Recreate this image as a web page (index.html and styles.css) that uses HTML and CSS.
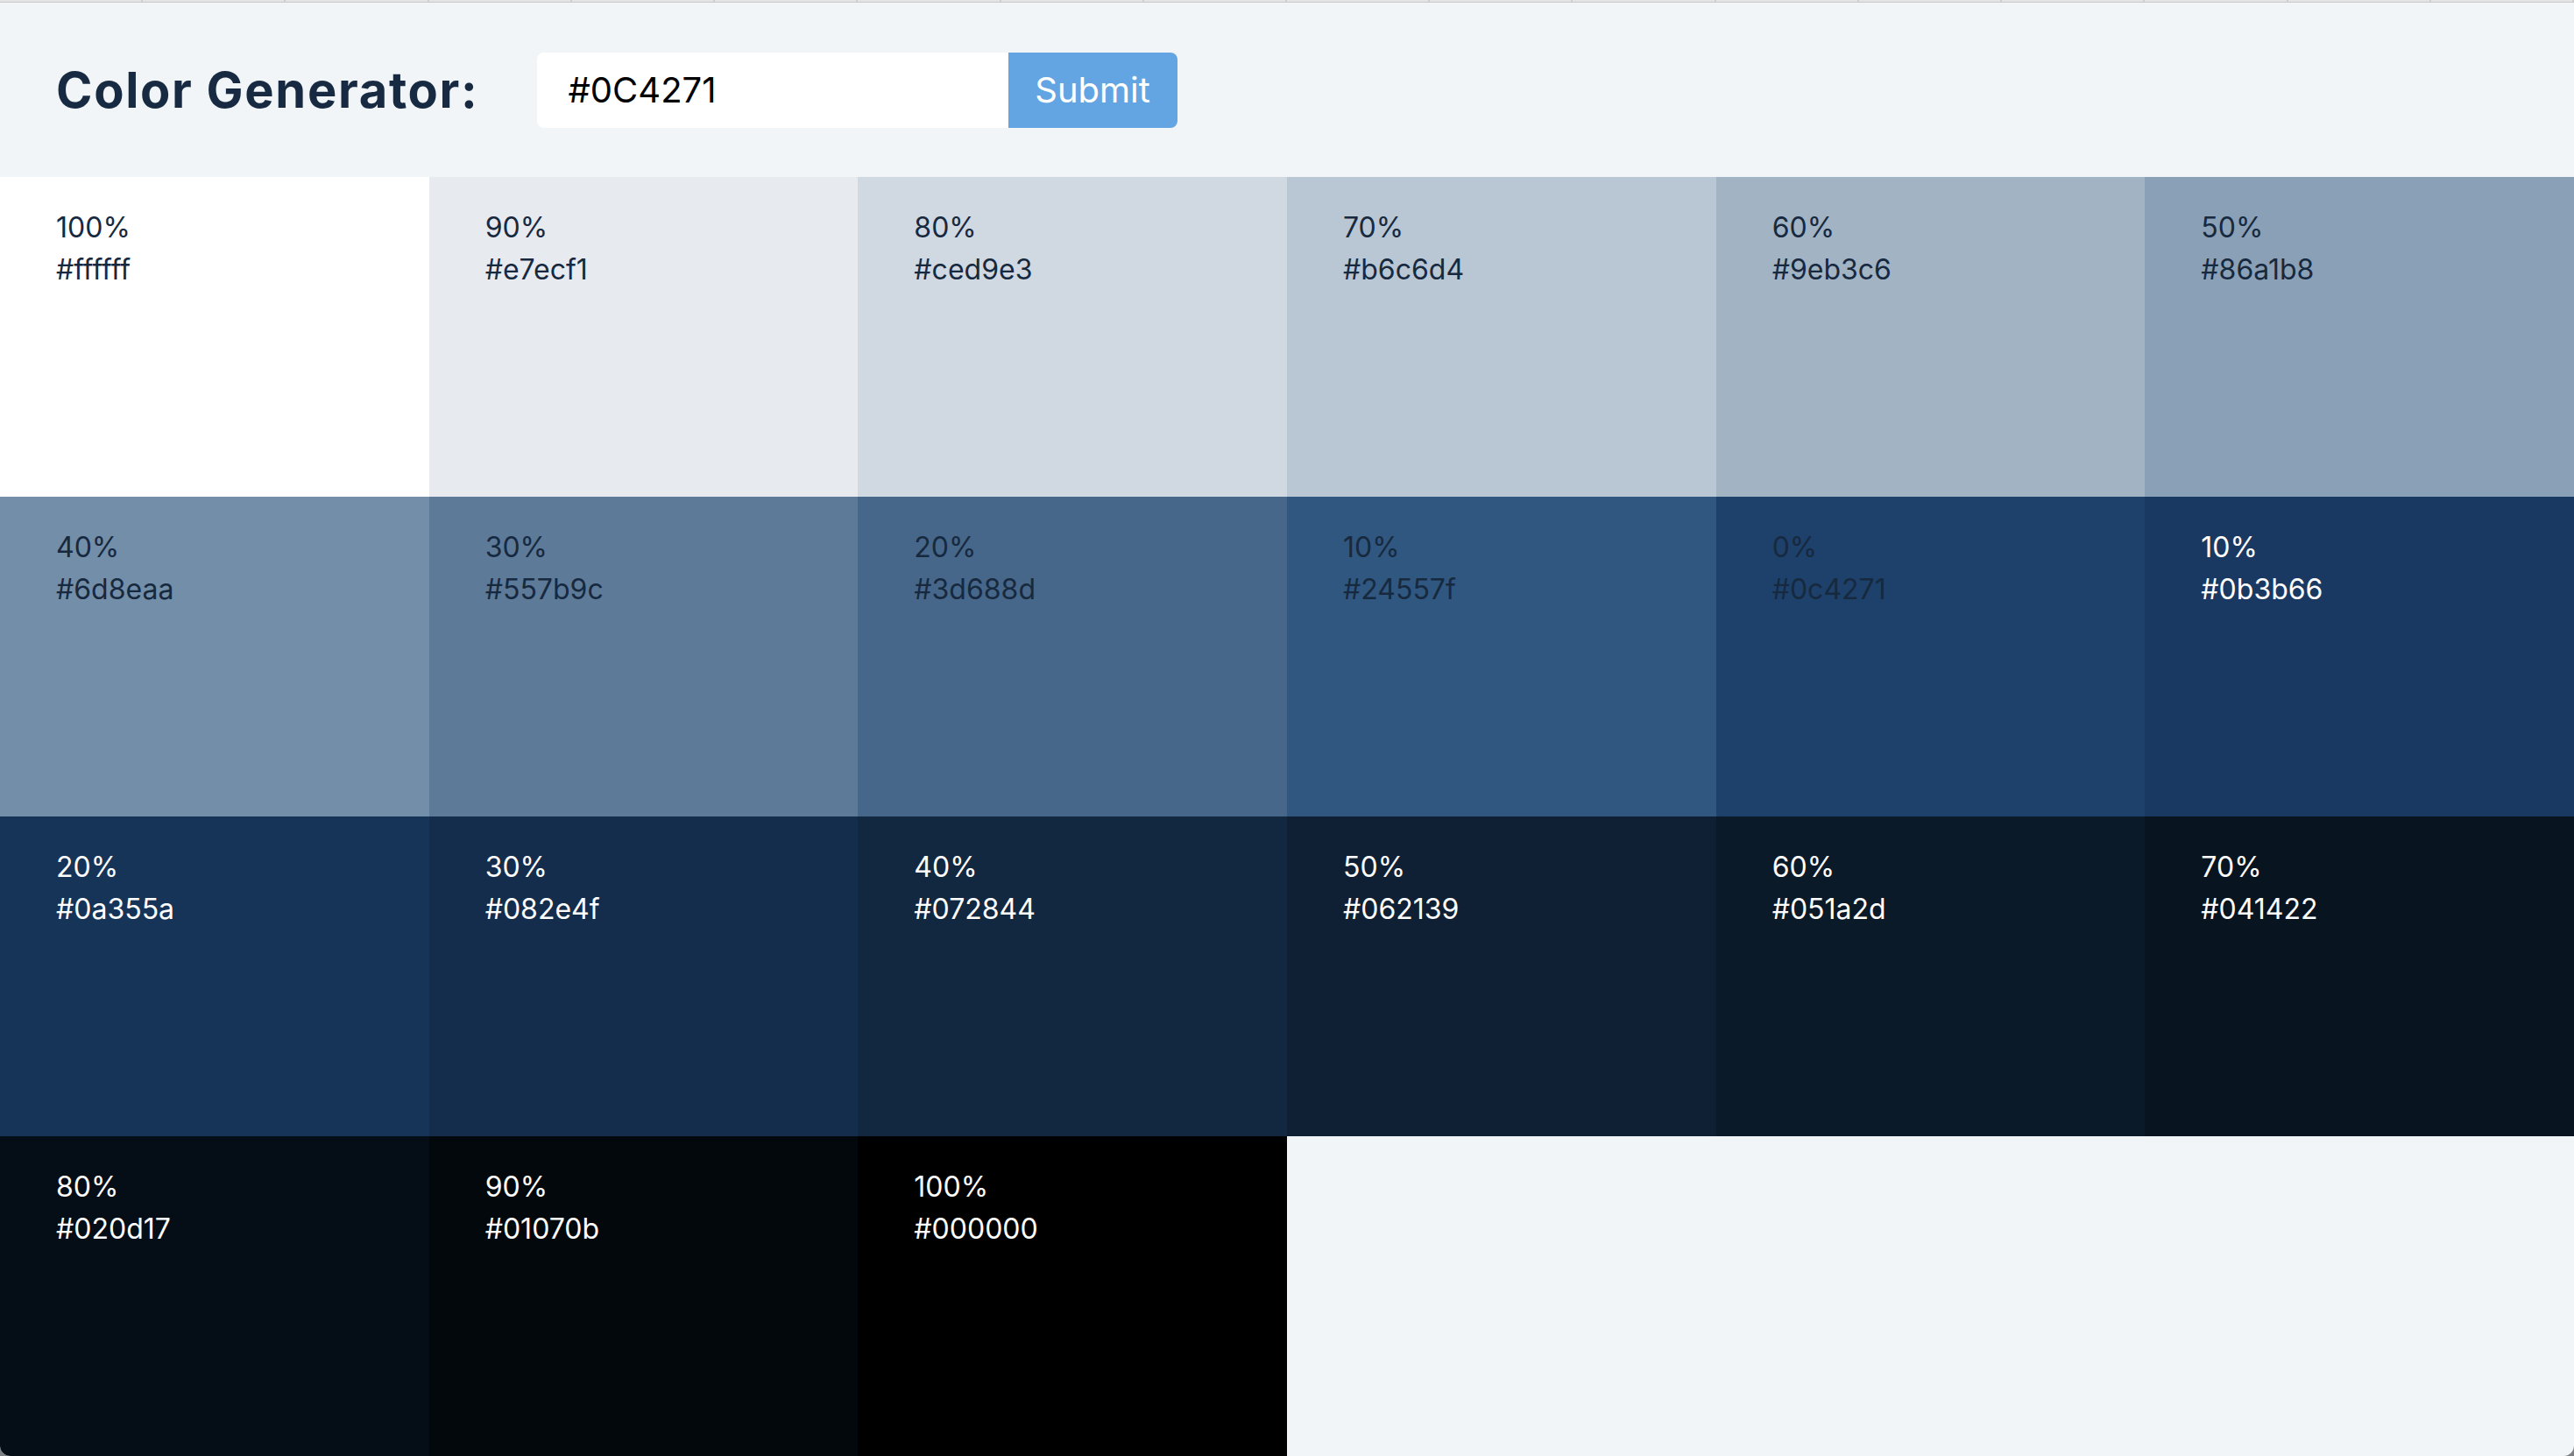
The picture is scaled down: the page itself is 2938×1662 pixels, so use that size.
FILE: index.html
```html
<!DOCTYPE html>
<html lang="en">
<head>
<meta charset="utf-8">
<title>Color Generator</title>
<link rel="stylesheet" href="styles.css">
</head>
<body>
<div class="window">
  <div class="tabstrip">
    <span class="tab"></span><span class="tab"></span><span class="tab"></span><span class="tab"></span>
    <span class="tab"></span><span class="tab"></span><span class="tab"></span><span class="tab"></span>
    <span class="tab"></span><span class="tab"></span><span class="tab"></span><span class="tab"></span>
    <span class="tab"></span><span class="tab"></span><span class="tab"></span><span class="tab"></span>
    <span class="tab"></span><span class="tab"></span>
  </div>
  <section class="container">
    <h3 class="title">Color Generator:</h3>
    <form class="form">
      <input class="input" type="text" value="#0C4271">
      <button class="btn" type="button">Submit</button>
    </form>
  </section>
  <section class="colors">
    <article class="color c1"><p class="percent">100%</p><p class="value">#ffffff</p></article>
    <article class="color c2"><p class="percent">90%</p><p class="value">#e7ecf1</p></article>
    <article class="color c3"><p class="percent">80%</p><p class="value">#ced9e3</p></article>
    <article class="color c4"><p class="percent">70%</p><p class="value">#b6c6d4</p></article>
    <article class="color c5"><p class="percent">60%</p><p class="value">#9eb3c6</p></article>
    <article class="color c6"><p class="percent">50%</p><p class="value">#86a1b8</p></article>
    <article class="color c7"><p class="percent">40%</p><p class="value">#6d8eaa</p></article>
    <article class="color c8"><p class="percent">30%</p><p class="value">#557b9c</p></article>
    <article class="color c9"><p class="percent">20%</p><p class="value">#3d688d</p></article>
    <article class="color c10"><p class="percent">10%</p><p class="value">#24557f</p></article>
    <article class="color c11"><p class="percent">0%</p><p class="value">#0c4271</p></article>
    <article class="color c12 light"><p class="percent">10%</p><p class="value">#0b3b66</p></article>
    <article class="color c13 light"><p class="percent">20%</p><p class="value">#0a355a</p></article>
    <article class="color c14 light"><p class="percent">30%</p><p class="value">#082e4f</p></article>
    <article class="color c15 light"><p class="percent">40%</p><p class="value">#072844</p></article>
    <article class="color c16 light"><p class="percent">50%</p><p class="value">#062139</p></article>
    <article class="color c17 light"><p class="percent">60%</p><p class="value">#051a2d</p></article>
    <article class="color c18 light"><p class="percent">70%</p><p class="value">#041422</p></article>
    <article class="color c19 light"><p class="percent">80%</p><p class="value">#020d17</p></article>
    <article class="color c20 light"><p class="percent">90%</p><p class="value">#01070b</p></article>
    <article class="color c21 light"><p class="percent">100%</p><p class="value">#000000</p></article>
  </section>
</div>
</body>
</html>
```

FILE: styles.css
```css
* {
  box-sizing: border-box;
}

html, body {
  margin: 0;
  padding: 0;
  height: 100%;
}

body {
  background: #7d7f82;
  font-family: Inter, "Liberation Sans", Arial, sans-serif;
  color: #17293f;
}

.window {
  height: 1662px;
  background: #f1f5f8;
  border-bottom-left-radius: 12px;
  border-bottom-right-radius: 12px;
  overflow: hidden;
  display: flex;
  flex-direction: column;
}

.tabstrip {
  height: 3px;
  display: flex;
  background: #e4e4e4;
  border-bottom: 1px solid #c9c9c9;
}

.tab {
  flex: 1;
  border-right: 2px solid #cfcfcf;
}

.container {
  height: 199px;
  display: flex;
  align-items: center;
  padding-left: 64px;
}

.title {
  margin: 0 66px 0 0;
  font-size: 56px;
  font-weight: 700;
  letter-spacing: 1.7px;
  line-height: 1.25;
  color: #172a41;
}

.form {
  display: flex;
  align-items: stretch;
}

.input {
  width: 538px;
  height: 86px;
  border: none;
  outline: none;
  padding: 0 36px;
  font-family: Inter, "Liberation Sans", Arial, sans-serif;
  font-size: 40px;
  color: #000;
  background: #fff;
  border-top-left-radius: 8px;
  border-bottom-left-radius: 8px;
}

.btn {
  width: 193px;
  height: 86px;
  border: none;
  padding: 0;
  font-family: Inter, "Liberation Sans", Arial, sans-serif;
  font-size: 40px;
  color: #fff;
  background: #63a5e2;
  border-top-right-radius: 8px;
  border-bottom-right-radius: 8px;
}

.colors {
  display: grid;
  grid-template-columns: repeat(6, 1fr);
  grid-auto-rows: 365px;
}

.color {
  padding: 34px 64px 30px;
  font-size: 32px;
  line-height: 48px;
  color: #17293f;
}

.color p {
  margin: 0;
}

.color.light {
  color: #ffffff;
}

.c1 { background: #ffffff; }
.c2 { background: #e7ebf0; }
.c3 { background: #d0d8e2; }
.c4 { background: #b9c6d3; }
.c5 { background: #a2b3c4; }
.c6 { background: #8aa0b7; }
.c7 { background: #738ea9; }
.c8 { background: #5d7a99; }
.c9 { background: #466789; }
.c10 { background: #30577f; }
.c11 { background: #1d416b; }
.c12 { background: #1a3962; }
.c13 { background: #163458; }
.c14 { background: #142d4c; }
.c15 { background: #122740; }
.c16 { background: #0f2034; }
.c17 { background: #0b1a29; }
.c18 { background: #08141f; }
.c19 { background: #050d16; }
.c20 { background: #02080c; }
.c21 { background: #000000; }
```
